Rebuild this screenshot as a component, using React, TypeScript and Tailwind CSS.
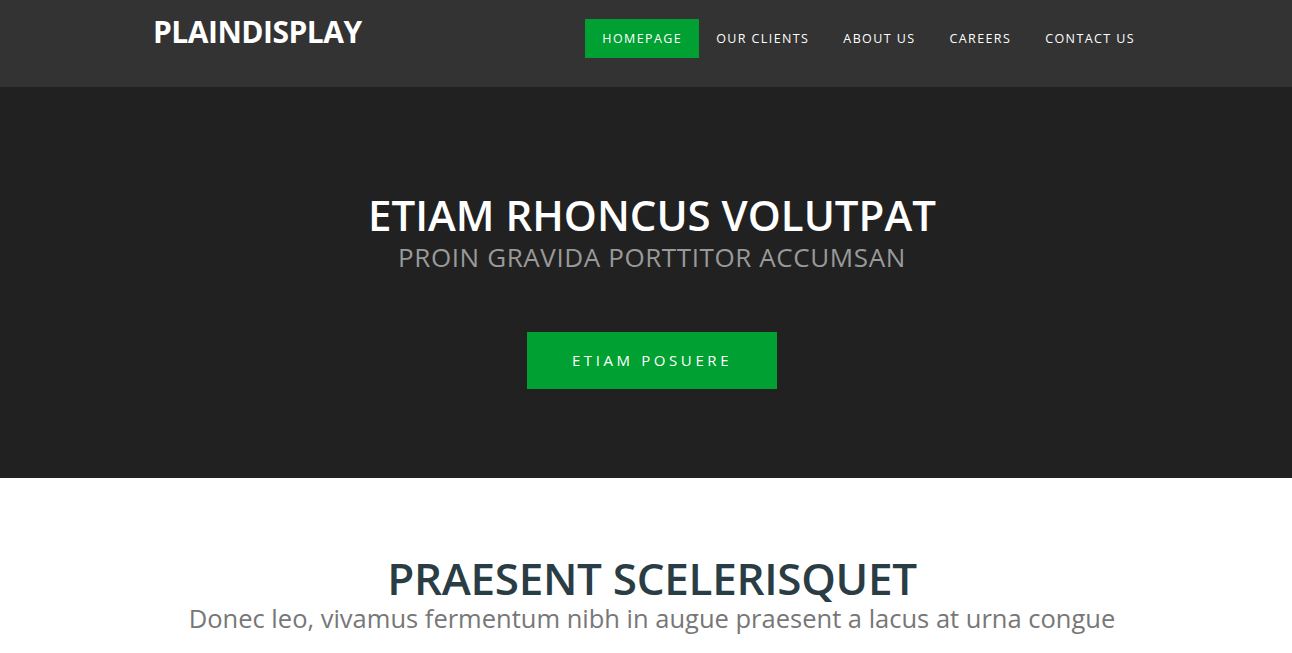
export default function App() {
  const nav = ["HOMEPAGE", "OUR CLIENTS", "ABOUT US", "CAREERS", "CONTACT US"];
  return (
    <div className="min-h-screen bg-white" style={{ fontFamily: "'Open Sans', 'Noto Sans', sans-serif" }}>
      {/* Header */}
      <header className="bg-[#333333] h-[87px]">
        <div className="max-w-[986px] mx-auto flex items-start justify-between">
          <a className="text-white text-[30px] font-bold tracking-[-0.5px] leading-none mt-[17px]">PLAINDISPLAY</a>
          <nav className="flex mt-[19px] -mr-[13px]">
            {nav.map((item, i) => (
              <a
                key={item}
                className={
                  "h-[39px] px-[17px] pt-[2px] flex items-center text-[12.5px] tracking-[1.4px] text-white " +
                  (i === 0 ? "bg-[#00a032]" : "")
                }
              >
                {item}
              </a>
            ))}
          </nav>
        </div>
      </header>

      {/* Hero */}
      <section className="bg-[#212121] h-[391px] flex flex-col items-center pl-3">
        <h1 className="text-white text-[42px] font-semibold leading-none mt-[107px]">ETIAM RHONCUS VOLUTPAT</h1>
        <h2 className="text-[#999999] text-[26px] tracking-[0.6px] leading-none mt-[8px]">PROIN GRAVIDA PORTTITOR ACCUMSAN</h2>
        <a className="mt-[62px] w-[250px] h-[57px] bg-[#00a032] text-white text-[15px] tracking-[3.6px] flex items-center justify-center">
          ETIAM POSUERE
        </a>
      </section>

      {/* Intro */}
      <section className="flex flex-col items-center pl-3">
        <h2 className="text-[#2a3d45] text-[44px] font-semibold tracking-[-0.3px] leading-none mt-[78px]">PRAESENT SCELERISQUET</h2>
        <p className="text-[#777777] text-[25.5px] leading-none mt-[6px]">
          Donec leo, vivamus fermentum nibh in augue praesent a lacus at urna congue
        </p>
      </section>
    </div>
  );
}
